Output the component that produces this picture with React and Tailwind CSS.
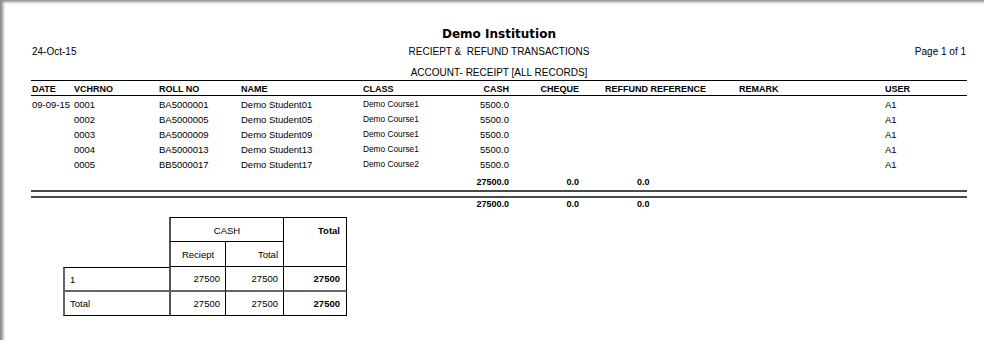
export default function App() {
  const rows = [
    ["09-09-15", "0001", "BA5000001", "Demo Student01", "Demo Course1"],
    ["", "0002", "BA5000005", "Demo Student05", "Demo Course1"],
    ["", "0003", "BA5000009", "Demo Student09", "Demo Course1"],
    ["", "0004", "BA5000013", "Demo Student13", "Demo Course1"],
    ["", "0005", "BB5000017", "Demo Student17", "Demo Course2"],
  ];
  const f = { fontFamily: '"Liberation Sans", Arial, sans-serif' };
  return (
    <div
      className="w-[984px] h-[340px] bg-white text-black shadow-[inset_4px_3px_3px_-1px_rgba(0,0,0,0.45)] overflow-hidden"
      style={f}
    >
      <div className="ml-[31px] w-[936px] pt-[26px]">
        <div
          className="h-[16px] leading-[16px] text-center text-[12px] font-bold"
          style={{ fontFamily: '"DejaVu Sans", Verdana, sans-serif' }}
        >
          Demo Institution
        </div>
        <div className="mt-[3px] h-[14px] leading-[14px] flex text-[10px]">
          <div className="w-[200px] pl-px">24-Oct-15</div>
          <div className="flex-1 text-center whitespace-pre">RECIEPT &amp;  REFUND TRANSACTIONS</div>
          <div className="w-[200px] text-right pr-px">Page 1 of 1</div>
        </div>
        <div className="mt-[7px] h-[14px] leading-[14px] text-center text-[10px]">
          ACCOUNT- RECEIPT [ALL RECORDS]
        </div>
        <div className="border-t border-black h-[16px] border-b flex items-center pt-[3px] text-[9px] font-bold leading-none pl-px">
          <div className="w-[42px]">DATE</div>
          <div className="w-[85px]">VCHRNO</div>
          <div className="w-[82px]">ROLL NO</div>
          <div className="w-[122px]">NAME</div>
          <div className="w-[87px]">CLASS</div>
          <div className="w-[59px] text-right">CASH</div>
          <div className="w-[70px] text-right">CHEQUE</div>
          <div className="w-[26px]" />
          <div className="w-[134px]">REFFUND REFERENCE</div>
          <div className="w-[146px]">REMARK</div>
          <div>USER</div>
        </div>
        {rows.map((r, i) => (
          <div key={i} className="h-[15px] flex items-center pt-[2px] text-[9.5px] leading-none pl-px">
            <div className="w-[42px]">{r[0]}</div>
            <div className="w-[85px]">{r[1]}</div>
            <div className="w-[82px]">{r[2]}</div>
            <div className="w-[122px]">{r[3]}</div>
            <div className="w-[87px] text-[8.3px]">{r[4]}</div>
            <div className="w-[59px] text-right">5500.0</div>
            <div className="w-[70px]" />
            <div className="w-[26px]" />
            <div className="w-[134px]" />
            <div className="w-[146px]" />
            <div>A1</div>
          </div>
        ))}
        <div className="h-[19px] flex items-center pt-[4px] text-[9px] font-bold leading-none pl-px">
          <div className="w-[418px]" />
          <div className="w-[59px] text-right">27500.0</div>
          <div className="w-[70px] text-right">0.0</div>
          <div className="w-[58px]" />
          <div>0.0</div>
        </div>
        <div className="h-[2px] bg-[#4a4a4a]" />
        <div className="h-[4px]" />
        <div className="h-[2px] bg-[#4a4a4a]" />
        <div className="h-[12px] flex items-center pt-[1px] text-[9px] font-bold leading-none pl-px">
          <div className="w-[418px]" />
          <div className="w-[59px] text-right">27500.0</div>
          <div className="w-[70px] text-right">0.0</div>
          <div className="w-[58px]" />
          <div>0.0</div>
        </div>
      </div>

      <div className="ml-[63px] mt-[7px] grid grid-cols-[106px_57px_58px_63px] grid-rows-[25px_25px_25px_24px] w-[284px] text-[9.5px] leading-none">
        <div className="row-span-2" />
        <div className="col-span-2 border-t border-l-2 border-l-[#555] border-r border-b border-black flex items-center justify-center pt-[2px]">
          CASH
        </div>
        <div className="row-span-2 border-t border-r border-b border-black flex justify-end pt-[8px] pr-[6px] font-bold">
          Total
        </div>
        <div className="border-l-2 border-l-[#555] border-r border-b border-black flex items-center justify-center pt-[2px]">
          Reciept
        </div>
        <div className="border-r border-b border-black flex items-center justify-end pr-[5px] pt-[2px]">Total</div>

        <div className="border-l-2 border-l-[#666] border-t border-black border-b-2 border-b-[#666] flex items-center pl-[5px] pt-[2px]">1</div>
        <div className="border-l-2 border-l-[#555] border-r border-black border-b-2 border-b-[#666] flex items-center justify-end pr-[5px]">27500</div>
        <div className="border-r border-black border-b-2 border-b-[#666] flex items-center justify-end pr-[5px]">27500</div>
        <div className="border-r border-black border-b-2 border-b-[#666] flex items-center justify-end pr-[6px] pt-[1px] font-bold">27500</div>

        <div className="border-l-2 border-l-[#666] border-b border-black flex items-center pl-[5px] pt-[1px]">Total</div>
        <div className="border-l-2 border-l-[#555] border-r border-b border-black flex items-center justify-end pr-[5px]">27500</div>
        <div className="border-r border-b border-black flex items-center justify-end pr-[5px]">27500</div>
        <div className="border-r border-b border-black flex items-center justify-end pr-[6px] pt-[1px] font-bold">27500</div>
      </div>
    </div>
  );
}
